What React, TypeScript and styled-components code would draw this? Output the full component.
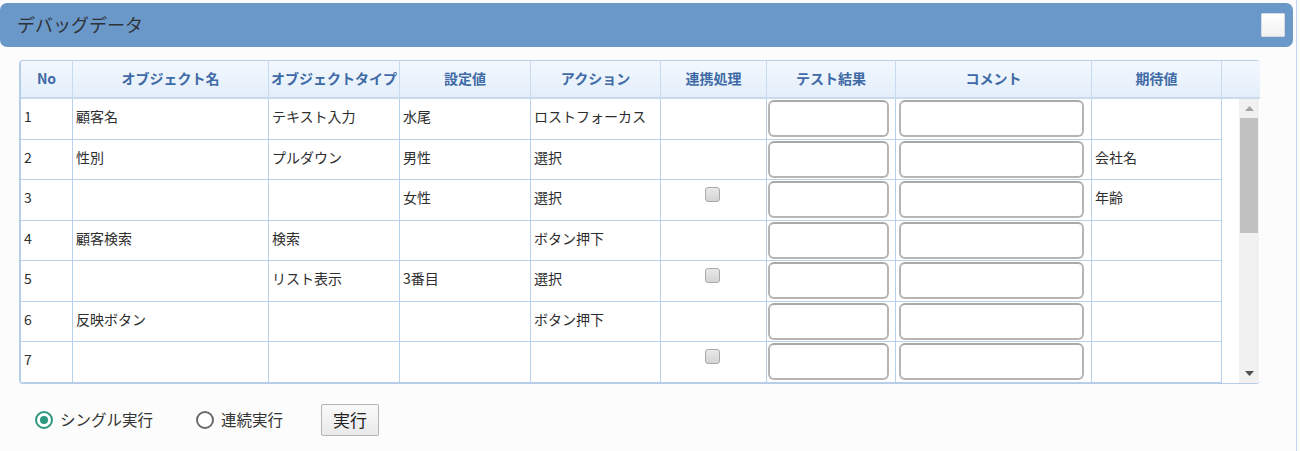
import React from 'react';
import styled, { createGlobalStyle } from 'styled-components';

interface IRow {
    no: number;
    name: string;
    type: string;
    value: string;
    action: string;
    linked: boolean;
    expected: string;
}

const rows: IRow[] = [
    { no: 1, name: '顧客名', type: 'テキスト入力', value: '水尾', action: 'ロストフォーカス', linked: false, expected: '' },
    { no: 2, name: '性別', type: 'プルダウン', value: '男性', action: '選択', linked: false, expected: '会社名' },
    { no: 3, name: '', type: '', value: '女性', action: '選択', linked: true, expected: '年齢' },
    { no: 4, name: '顧客検索', type: '検索', value: '', action: 'ボタン押下', linked: false, expected: '' },
    { no: 5, name: '', type: 'リスト表示', value: '3番目', action: '選択', linked: true, expected: '' },
    { no: 6, name: '反映ボタン', type: '', value: '', action: 'ボタン押下', linked: false, expected: '' },
    { no: 7, name: '', type: '', value: '', action: '', linked: true, expected: '' },
];

const headers = ['No', 'オブジェクト名', 'オブジェクトタイプ', '設定値', 'アクション', '連携処理', 'テスト結果', 'コメント', '期待値'];

const COLS = '52px 196px 131px 131px 130px 106px 129px 196px 130px';

const GlobalStyle = createGlobalStyle`
    body {
        margin: 0;
        background: #fcfcfc;
        font-family: "Noto Sans CJK JP", "Noto Sans", sans-serif;
        color: #333;
    }
`;

const Page = styled.div`
    width: 1297px;
    height: 451px;
    box-sizing: border-box;
    padding-top: 3px;
    border-right: 1px solid #c3d6ec;
`;

const TitleBar = styled.div`
    height: 44px;
    margin-right: 3px;
    background: #6a98c9;
    border-radius: 7px;
    display: flex;
    align-items: center;
    justify-content: space-between;
    padding: 0 8px 0 17px;
`;

const Title = styled.span`
    font-size: 18px;
    line-height: 1.3;
    color: #2f3338;
`;

const ToggleBox = styled.div`
    width: 22px;
    height: 22px;
    background: linear-gradient(#ffffff, #f1f1f1);
    border: 1px solid #d5dbe2;
    border-radius: 1px;
`;

const Grid = styled.div`
    margin: 13px 0 0 19px;
    width: 1241px;
    box-sizing: border-box;
    border: 1px solid #b6cde8;
    border-left: 2px solid #b6cde8;
    border-right: none;
    border-radius: 4px;
    overflow: hidden;
    background: #fff;
`;

const HeaderRow = styled.div`
    display: grid;
    grid-template-columns: ${COLS} 1fr;
    height: 36px;
    background: linear-gradient(#f3f8fe, #e3eefa);
    border-bottom: 2px solid #c9dbef;
`;

const HeaderCell = styled.div`
    box-sizing: border-box;
    border-right: 1px solid #c8daee;
    padding: 0 3px 2px;
    display: flex;
    align-items: center;
    justify-content: center;
    white-space: nowrap;
    overflow: hidden;
    font-size: 14px;
    font-weight: bold;
    color: #3e6aa6;
    &:last-child {
        border-right: none;
    }
`;

const Body = styled.div`
    display: flex;
    height: 284px;
`;

const RowList = styled.div`
    width: 1201px;
    overflow: hidden;
`;

const Row = styled.div`
    display: grid;
    grid-template-columns: ${COLS};
    height: 40.5px;
`;

const Cell = styled.div<{ $center?: boolean }>`
    box-sizing: border-box;
    border-right: 1px solid #b9d0ea;
    border-bottom: 1px solid #b9d0ea;
    padding: 0 0 4px 3px;
    display: flex;
    align-items: center;
    justify-content: ${props => (props.$center ? 'center' : 'flex-start')};
    white-space: nowrap;
    overflow: hidden;
    font-size: 14px;
    line-height: 1.2;
    color: #2e2e2e;
`;

const InputCell = styled.div<{ $left: number }>`
    box-sizing: border-box;
    border-right: 1px solid #b9d0ea;
    border-bottom: 1px solid #b9d0ea;
    padding: 1px 0 0 ${props => props.$left}px;
`;

const TextBox = styled.input<{ $w: number }>`
    display: block;
    box-sizing: border-box;
    width: ${props => props.$w}px;
    height: 37px;
    margin: 0;
    border: 2px solid #b5b5b5;
    border-top-color: #a9a9a9;
    border-radius: 6px;
    background: #fff;
    outline: none;
`;

const Check = styled.span`
    width: 13px;
    height: 13px;
    margin: 0 6px 6px 0;
    border: 1px solid #a9a9a9;
    border-radius: 3px;
    background: linear-gradient(#e9e9e9, #d4d4d4);
`;

const Spacer = styled.div`
    width: 17px;
`;

const ScrollTrack = styled.div`
    width: 20px;
    background: #f1f1f1;
    display: flex;
    flex-direction: column;
    align-items: center;
`;

const ArrowBtn = styled.div`
    height: 19px;
    width: 100%;
    display: flex;
    align-items: center;
    justify-content: center;
`;

const Thumb = styled.div`
    width: 18px;
    height: 115px;
    background: #c1c1c1;
`;

const TrackFill = styled.div`
    flex: 1;
`;

const Controls = styled.div`
    display: flex;
    align-items: center;
    margin-top: 19px;
    padding-left: 35px;
    height: 34px;
`;

const RadioItem = styled.label<{ $gap: number }>`
    display: flex;
    align-items: center;
    margin-right: ${props => props.$gap}px;
    font-size: 15.5px;
    line-height: 1.4;
    color: #333;
`;

const RadioMark = styled.span<{ $on?: boolean }>`
    box-sizing: border-box;
    width: 18px;
    height: 18px;
    margin-right: 7px;
    border-radius: 50%;
    border: 2px solid ${props => (props.$on ? '#2a9a7e' : '#6a6a6a')};
    background: #fff;
    display: flex;
    align-items: center;
    justify-content: center;
    &::after {
        content: '';
        width: 8px;
        height: 8px;
        border-radius: 50%;
        background: ${props => (props.$on ? '#2a9a7e' : 'transparent')};
    }
`;

const RunButton = styled.button`
    width: 58px;
    height: 32px;
    box-sizing: border-box;
    border: 1px solid #b4b4b4;
    border-radius: 2px;
    background: linear-gradient(#fafafa, #e9e9e9);
    font-family: "Noto Sans CJK JP", sans-serif;
    font-size: 17px;
    line-height: 1.2;
    color: #222;
    padding: 0;
`;

const DataRow: React.FC<{ row: IRow }> = ({ row }) => (
    <Row>
        <Cell>{row.no}</Cell>
        <Cell>{row.name}</Cell>
        <Cell>{row.type}</Cell>
        <Cell>{row.value}</Cell>
        <Cell>{row.action}</Cell>
        <Cell $center>{row.linked && <Check />}</Cell>
        <InputCell $left={1}><TextBox $w={121} /></InputCell>
        <InputCell $left={3}><TextBox $w={185} /></InputCell>
        <Cell>{row.expected}</Cell>
    </Row>
);

const App: React.FC = () => {
    return (
        <Page>
            <GlobalStyle />
            <TitleBar>
                <Title>デバッグデータ</Title>
                <ToggleBox />
            </TitleBar>
            <Grid>
                <HeaderRow>
                    {headers.map(h => <HeaderCell key={h}>{h}</HeaderCell>)}
                    <HeaderCell />
                </HeaderRow>
                <Body>
                    <RowList>
                        {rows.map(r => <DataRow key={r.no} row={r} />)}
                    </RowList>
                    <Spacer />
                    <ScrollTrack>
                        <ArrowBtn>
                            <svg width="9" height="5" viewBox="0 0 9 5"><path d="M0 5 L4.5 0 L9 5 Z" fill="#a3a3a3" /></svg>
                        </ArrowBtn>
                        <Thumb />
                        <TrackFill />
                        <ArrowBtn>
                            <svg width="9" height="5" viewBox="0 0 9 5"><path d="M0 0 L4.5 5 L9 0 Z" fill="#505050" /></svg>
                        </ArrowBtn>
                    </ScrollTrack>
                </Body>
            </Grid>
            <Controls>
                <RadioItem $gap={43}><RadioMark $on />シングル実行</RadioItem>
                <RadioItem $gap={38}><RadioMark />連続実行</RadioItem>
                <RunButton>実行</RunButton>
            </Controls>
        </Page>
    );
};

export default App;
